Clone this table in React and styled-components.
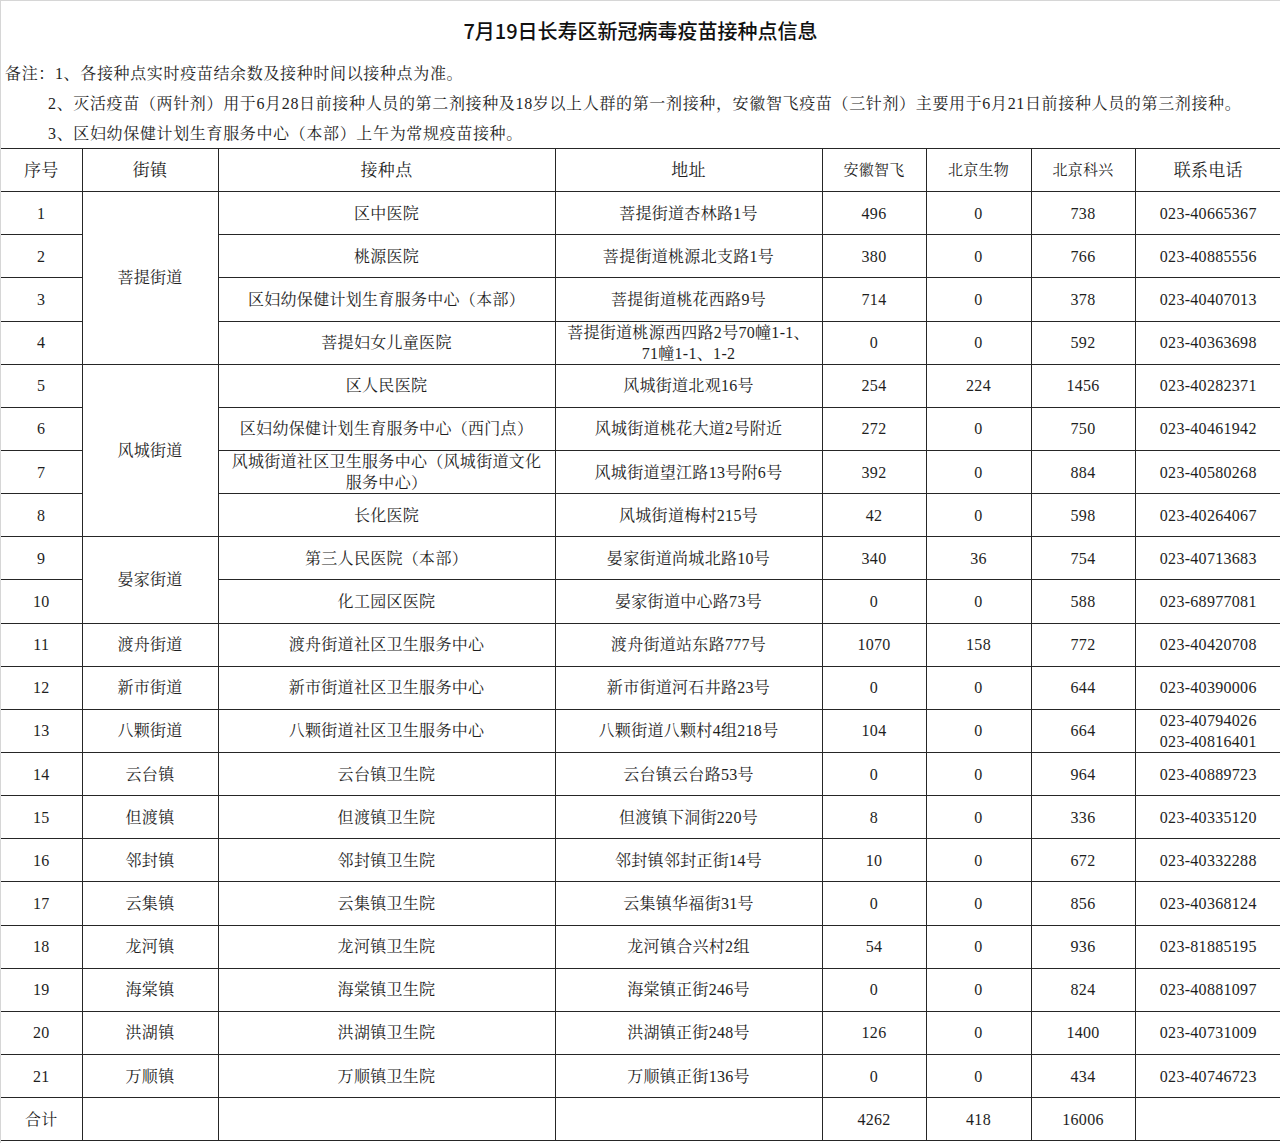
import styled, { createGlobalStyle } from 'styled-components';

const GlobalStyle = createGlobalStyle`
  html, body {
    margin: 0;
    padding: 0;
    background: #ffffff;
  }
`;

const Page = styled.div`
  width: 1280px;
  height: 1143px;
  box-sizing: border-box;
  border-top: 1px solid #d6d6d6;
  border-left: 1px solid #d6d6d6;
  overflow: hidden;
  color: #1e1e1e;
  font-family: 'Liberation Serif', 'Noto Serif CJK SC', 'Noto Sans CJK SC', serif;
`;

const Title = styled.h1`
  margin: 0;
  height: 57px;
  line-height: 59px;
  text-align: center;
  font-family: 'Noto Sans CJK SC', 'Noto Sans', sans-serif;
  font-size: 20px;
  font-weight: 500;
  color: #111;
`;

const Notes = styled.div`
  height: 90px;
  font-size: 16px;
  letter-spacing: 0.65px;
`;

const NoteLine = styled.div`
  height: 30px;
  line-height: 31px;
  padding-left: ${(p) => (p.$first ? '4px' : '47px')};
  white-space: nowrap;
`;

const Table = styled.table`
  width: 1280px;
  border-collapse: collapse;
  table-layout: fixed;
  font-size: 16px;
  letter-spacing: 0.3px;
`;

const Cell = styled.td`
  height: 43.15px;
  padding: 0 4px;
  border: 1px solid #262626;
  text-align: center;
  vertical-align: middle;
  line-height: 21px;
  box-sizing: border-box;

  &:first-child {
    border-left: none;
  }
  &:last-child {
    border-right: none;
  }
`;

const HeadCell = styled(Cell).attrs({ as: 'th' })`
  font-weight: normal;
  font-size: ${(p) => (p.$small ? '15px' : '17px')};
`;

const widths = [81, 136, 337, 267, 104, 105, 104, 146];

const headers = ['序号', '街镇', '接种点', '地址', '安徽智飞', '北京生物', '北京科兴', '联系电话'];

const rows = [
  [1, '区中医院', '菩提街道杏林路1号', 496, 0, 738, '023-40665367'],
  [2, '桃源医院', '菩提街道桃源北支路1号', 380, 0, 766, '023-40885556'],
  [3, '区妇幼保健计划生育服务中心（本部）', '菩提街道桃花西路9号', 714, 0, 378, '023-40407013'],
  [4, '菩提妇女儿童医院', ['菩提街道桃源西四路2号70幢1-1、', '71幢1-1、1-2'], 0, 0, 592, '023-40363698'],
  [5, '区人民医院', '风城街道北观16号', 254, 224, 1456, '023-40282371'],
  [6, '区妇幼保健计划生育服务中心（西门点）', '风城街道桃花大道2号附近', 272, 0, 750, '023-40461942'],
  [7, ['风城街道社区卫生服务中心（风城街道文化', '服务中心）'], '风城街道望江路13号附6号', 392, 0, 884, '023-40580268'],
  [8, '长化医院', '风城街道梅村215号', 42, 0, 598, '023-40264067'],
  [9, '第三人民医院（本部）', '晏家街道尚城北路10号', 340, 36, 754, '023-40713683'],
  [10, '化工园区医院', '晏家街道中心路73号', 0, 0, 588, '023-68977081'],
  [11, '渡舟街道社区卫生服务中心', '渡舟街道站东路777号', 1070, 158, 772, '023-40420708'],
  [12, '新市街道社区卫生服务中心', '新市街道河石井路23号', 0, 0, 644, '023-40390006'],
  [13, '八颗街道社区卫生服务中心', '八颗街道八颗村4组218号', 104, 0, 664, ['023-40794026', '023-40816401']],
  [14, '云台镇卫生院', '云台镇云台路53号', 0, 0, 964, '023-40889723'],
  [15, '但渡镇卫生院', '但渡镇下洞街220号', 8, 0, 336, '023-40335120'],
  [16, '邻封镇卫生院', '邻封镇邻封正街14号', 10, 0, 672, '023-40332288'],
  [17, '云集镇卫生院', '云集镇华福街31号', 0, 0, 856, '023-40368124'],
  [18, '龙河镇卫生院', '龙河镇合兴村2组', 54, 0, 936, '023-81885195'],
  [19, '海棠镇卫生院', '海棠镇正街246号', 0, 0, 824, '023-40881097'],
  [20, '洪湖镇卫生院', '洪湖镇正街248号', 126, 0, 1400, '023-40731009'],
  [21, '万顺镇卫生院', '万顺镇正街136号', 0, 0, 434, '023-40746723'],
];

// 街镇 column: first row of each town and how many rows it spans
const towns = {
  1: ['菩提街道', 4],
  5: ['风城街道', 4],
  9: ['晏家街道', 2],
  11: ['渡舟街道', 1],
  12: ['新市街道', 1],
  13: ['八颗街道', 1],
  14: ['云台镇', 1],
  15: ['但渡镇', 1],
  16: ['邻封镇', 1],
  17: ['云集镇', 1],
  18: ['龙河镇', 1],
  19: ['海棠镇', 1],
  20: ['洪湖镇', 1],
  21: ['万顺镇', 1],
};

function Lines({ value }) {
  if (!Array.isArray(value)) return value;
  return value.map((line, i) => (
    <span key={i}>
      {i > 0 && <br />}
      {line}
    </span>
  ));
}

export default function App() {
  return (
    <>
      <GlobalStyle />
      <Page>
        <Title>7月19日长寿区新冠病毒疫苗接种点信息</Title>
        <Notes>
          <NoteLine $first>备注：1、各接种点实时疫苗结余数及接种时间以接种点为准。</NoteLine>
          <NoteLine>
            2、灭活疫苗（两针剂）用于6月28日前接种人员的第二剂接种及18岁以上人群的第一剂接种，安徽智飞疫苗（三针剂）主要用于6月21日前接种人员的第三剂接种。
          </NoteLine>
          <NoteLine>3、区妇幼保健计划生育服务中心（本部）上午为常规疫苗接种。</NoteLine>
        </Notes>
        <Table>
          <colgroup>
            {widths.map((w, i) => (
              <col key={i} style={{ width: w }} />
            ))}
          </colgroup>
          <thead>
            <tr>
              {headers.map((h, i) => (
                <HeadCell key={h} $small={i >= 4 && i <= 6}>
                  {h}
                </HeadCell>
              ))}
            </tr>
          </thead>
          <tbody>
            {rows.map(([no, site, addr, zf, bj, kx, tel]) => (
              <tr key={no}>
                <Cell>{no}</Cell>
                {towns[no] && <Cell rowSpan={towns[no][1]}>{towns[no][0]}</Cell>}
                <Cell>
                  <Lines value={site} />
                </Cell>
                <Cell>
                  <Lines value={addr} />
                </Cell>
                <Cell>{zf}</Cell>
                <Cell>{bj}</Cell>
                <Cell>{kx}</Cell>
                <Cell>
                  <Lines value={tel} />
                </Cell>
              </tr>
            ))}
            <tr>
              <Cell>合计</Cell>
              <Cell />
              <Cell />
              <Cell />
              <Cell>4262</Cell>
              <Cell>418</Cell>
              <Cell>16006</Cell>
              <Cell />
            </tr>
          </tbody>
        </Table>
      </Page>
    </>
  );
}
